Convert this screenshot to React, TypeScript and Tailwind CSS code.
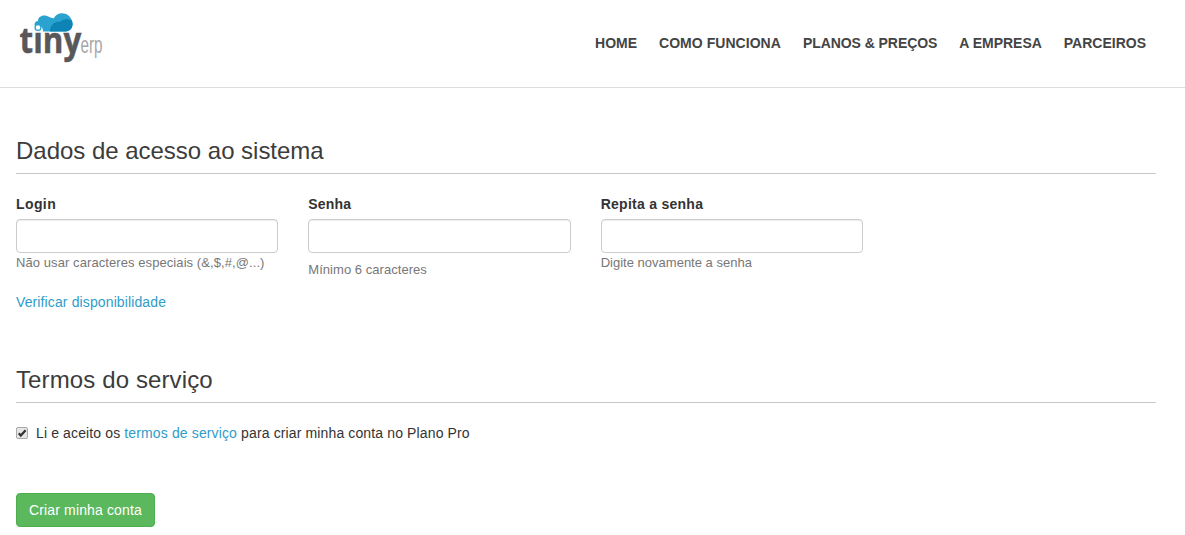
import type { ReactNode } from "react";

const navItems = [
  { label: "HOME", spacing: "tracking-[0px]" },
  { label: "COMO FUNCIONA", spacing: "tracking-[0.04px]" },
  { label: "PLANOS & PREÇOS", spacing: "tracking-[-0.06px]" },
  { label: "A EMPRESA", spacing: "tracking-[-0.03px]" },
  { label: "PARCEIROS", spacing: "tracking-[0px]" },
];

function Logo() {
  return (
    <svg width="96" height="66" viewBox="0 0 96 66" className="ml-4 mt-[10px]" aria-label="tiny erp">
      <text transform="translate(3.6 43.3) scale(0.86 1)" fontFamily="'Open Sans', sans-serif" fontWeight="700" fontSize="36.5" fill="#58585a" stroke="#58585a" strokeWidth="0.5">tiny</text>
      <text transform="translate(64.5 43) scale(0.65 1)" fontFamily="'Liberation Sans', sans-serif" fontSize="23.5" fill="#a6a6a8">erp</text>
      {/* cloud */}
      <circle cx="21.5" cy="16.5" r="5.5" fill="#fff" />
      <path d="M18.5 15.5 C18.5 12.5 19.5 11 22 11 C22 7 26 4.5 31 6 C34 7 37 9 38 8 C40 4 45 2 50 4 C54 6 57 10 56.5 15 C56 19.5 53 21.5 49 21.5 L27 21.5 C27 17 24 14 18.5 15.5 Z" fill="#2ba3d0" />
      <path d="M34 21.5 C34 15 39 11 44 12 C46 9 52 8 56 11 C58 16 55 21.5 49 21.5 Z" fill="#0e83b5" />
      <circle cx="22" cy="17.4" r="2.9" fill="#fff" stroke="#2ba3d0" strokeWidth="1.3" />
    </svg>
  );
}

function Section({ title, titleClass, children }: { title: string; titleClass: string; children: ReactNode }) {
  return (
    <section>
      <h2 className={`h-[39px] border-b border-[#c8c8c8] text-2xl leading-[32px] text-[#3c3c3c] ${titleClass}`}>{title}</h2>
      {children}
    </section>
  );
}

type FieldProps = {
  label: string;
  labelClass: string;
  help: string;
  helpClass: string;
  type?: string;
  children?: ReactNode;
};

function Field({ label, labelClass, help, helpClass, type = "password", children }: FieldProps) {
  return (
    <div>
      <label className="block text-sm font-bold leading-5 text-[#333]">
        <span className={`block ${labelClass}`}>{label}</span>
        <input
          type={type}
          className="mt-[5px] block h-[34px] w-full rounded-[4px] border border-[#ccc] bg-white px-3 shadow-[inset_0_1px_1px_rgba(0,0,0,0.075)] outline-none"
        />
      </label>
      <p className={`text-[13px] leading-[19px] text-[#777] ${helpClass}`}>{help}</p>
      {children}
    </div>
  );
}

export default function App() {
  return (
    <div className="min-h-[535px] bg-white font-['Liberation_Sans',Arial,sans-serif] text-sm text-[#333]">
      <header className="flex h-[88px] justify-between border-b border-[#ddd]">
        <Logo />
        <nav className="mr-[39px] flex gap-[22px] pt-[33px] text-sm font-bold leading-5 text-[#444]">
          {navItems.map((item) => (
            <a key={item.label} href="#" className={item.spacing}>{item.label}</a>
          ))}
        </nav>
      </header>

      <main className="ml-4 w-[1140px] pt-[47px]">
        <Section title="Dados de acesso ao sistema" titleClass="tracking-[-0.02px]">
          <div className="grid h-[171px] w-[847px] grid-cols-3 gap-x-[30px] pt-5">
            <Field
              label="Login"
              labelClass="tracking-[0.4px]"
              type="text"
              help="Não usar caracteres especiais (&,$,#,@...)"
              helpClass="tracking-[0.08px]"
            >
              <a href="#" className="mt-5 block leading-5 tracking-[0.12px] text-[#2f9cc9]">Verificar disponibilidade</a>
            </Field>
            <Field label="Senha" labelClass="tracking-[0.2px]" help="Mínimo 6 caracteres" helpClass="pt-[7px] tracking-[0.04px]" />
            <Field label="Repita a senha" labelClass="tracking-[0.27px]" help="Digite novamente a senha" helpClass="tracking-[0.01px]" />
          </div>
        </Section>

        <div className="mt-[19px]">
          <Section title="Termos do serviço" titleClass="tracking-[0.12px]">
            <div className="flex items-center pt-5 leading-5">
              <span className="relative mr-2 h-3 w-3 rounded-[2px] border border-[#a9a9a9] bg-[#e6e6e6]">
                <svg className="absolute -left-px -top-px" width="12" height="12" viewBox="0 0 12 12">
                  <path d="M2.8 6.2 L4.8 8.6 L9.6 3.2" fill="none" stroke="#333" strokeWidth="2.2" />
                </svg>
              </span>
              <p className="tracking-[0.13px]">
                Li e aceito os <a href="#" className="text-[#2f9cc9]">termos de serviço</a> para criar minha conta no Plano Pro
              </p>
            </div>
          </Section>
        </div>

        <button className="mt-[50px] h-[34px] w-[139px] rounded-[4px] border border-[#4cae4c] bg-[#5cb85c] text-sm tracking-[0.14px] text-white">
          Criar minha conta
        </button>
      </main>
    </div>
  );
}
